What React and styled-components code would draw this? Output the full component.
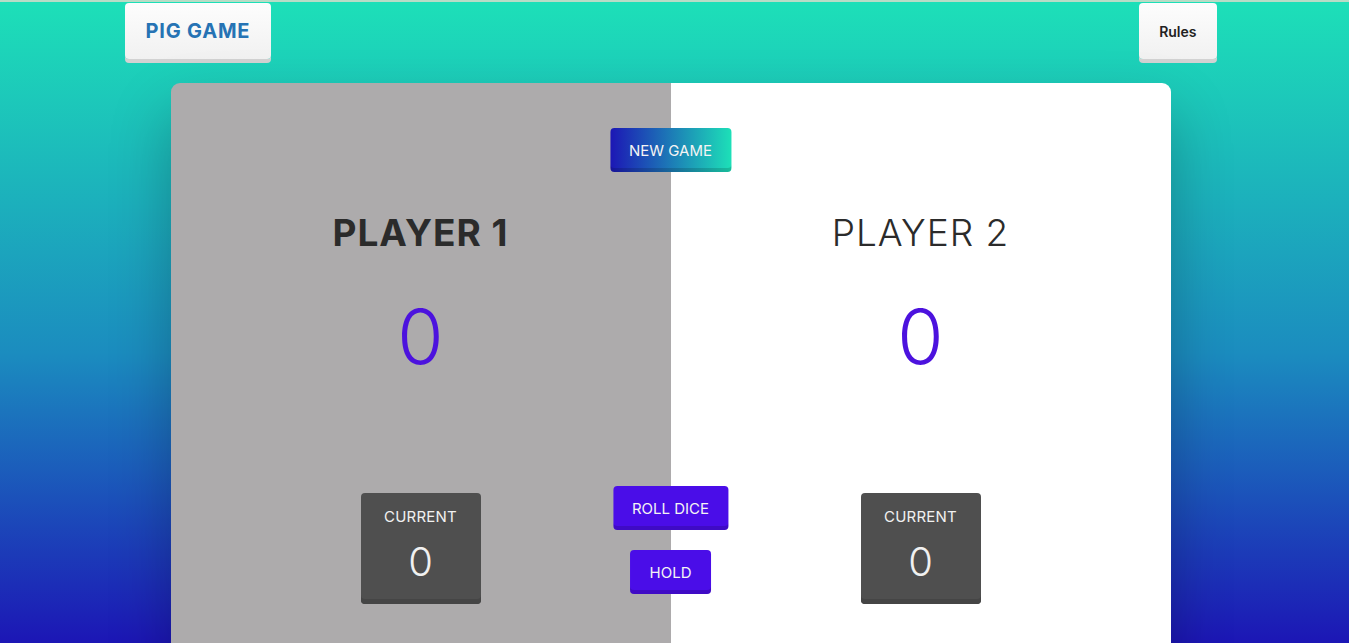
import React from 'react';
import styled, { createGlobalStyle } from 'styled-components';

const GlobalStyle = createGlobalStyle`
  * { box-sizing: border-box; }
  html, body { margin: 0; padding: 0; }
  body {
    font-family: 'Inter', 'Noto Sans', sans-serif;
    background: linear-gradient(to bottom, #1de0b8 0%, #1b8cbf 55%, #1c16b5 100%);
    min-height: 100vh;
    overflow: hidden;
  }
`;

const Page = styled.div`
  height: 643px;
  overflow: hidden;
  border-top: 2px solid #b8dcc6;
  padding-right: 8px;
  display: flex;
  flex-direction: column;
  align-items: center;
`;

const Header = styled.header`
  width: 1092px;
  display: flex;
  justify-content: space-between;
  padding-top: 1px;
`;

const TopButton = styled.button`
  height: 56px;
  padding: 0 ${(p) => p.$pad}px;
  border: none;
  border-radius: 4px;
  background: linear-gradient(to bottom, #fdfdfd, #f1f1f1);
  box-shadow: 0 4px 0 #d2d2d2;
  font-family: inherit;
  font-size: ${(p) => p.$size}px;
  font-weight: ${(p) => p.$weight};
  letter-spacing: ${(p) => p.$spacing || 0}px;
  color: ${(p) => p.$color};
  cursor: pointer;
`;

const Board = styled.main`
  position: relative;
  margin-top: 24px;
  width: 1000px;
  height: 620px;
  flex-shrink: 0;
  border-radius: 9px;
  overflow: hidden;
  display: grid;
  grid-template-columns: 1fr 1fr;
  box-shadow: 0 30px 60px rgba(0, 0, 0, 0.25);
`;

const Player = styled.section`
  background: ${(p) => (p.$active ? '#adabac' : '#ffffff')};
  display: flex;
  flex-direction: column;
  align-items: center;
  padding-top: 122px;
`;

const Name = styled.h2`
  margin: 0;
  font-size: 37px;
  line-height: 56px;
  letter-spacing: 1px;
  font-weight: ${(p) => (p.$active ? 700 : 300)};
  color: #2b2b2b;
`;

const Score = styled.p`
  margin: 26px 0 0;
  font-size: 75px;
  line-height: 100px;
  font-weight: 300;
  color: #4c12de;
`;

const Current = styled.div`
  margin-top: 106px;
  width: 120px;
  height: 111px;
  border-radius: 4px;
  background: #4f4f4f;
  box-shadow: inset 0 -5px 0 #454545;
  display: flex;
  flex-direction: column;
  align-items: center;
  padding-top: 15px;
  color: #f1f1f1;
`;

const CurrentLabel = styled.span`
  font-size: 15px;
  line-height: 18px;
  letter-spacing: 0.2px;
`;

const CurrentScore = styled.span`
  margin-top: 12px;
  font-size: 40px;
  line-height: 48px;
  font-weight: 300;
`;

const Action = styled.button`
  position: absolute;
  left: 50%;
  top: ${(p) => p.$top}px;
  transform: translateX(-50%);
  height: 44px;
  padding: 0 ${(p) => p.$pad}px;
  border: none;
  border-radius: 4px;
  font-family: inherit;
  font-size: 15px;
  font-weight: 400;
  color: #f4f4f4;
  background: ${(p) =>
    p.$gradient ? 'linear-gradient(to right, #1c17b5, #1de0b8)' : '#4a0de8'};
  box-shadow: inset 0 -4px 0 rgba(0, 0, 0, 0.15);
  white-space: nowrap;
  cursor: pointer;
`;

const players = [
  { name: 'PLAYER 1', score: 0, current: 0, active: true },
  { name: 'PLAYER 2', score: 0, current: 0, active: false },
];

const App = () => (
  <>
    <GlobalStyle />
    <Page>
      <Header>
        <TopButton $pad={21} $size={20} $weight={700} $spacing={0.8} $color="#2673b4">PIG GAME</TopButton>
        <TopButton $pad={20} $size={14} $weight={600} $color="#222">Rules</TopButton>
      </Header>
      <Board>
        {players.map((p) => (
          <Player key={p.name} $active={p.active}>
            <Name $active={p.active}>{p.name}</Name>
            <Score>{p.score}</Score>
            <Current>
              <CurrentLabel>CURRENT</CurrentLabel>
              <CurrentScore>{p.current}</CurrentScore>
            </Current>
          </Player>
        ))}
        <Action $top={45} $pad={19} $gradient>NEW GAME</Action>
        <Action $top={403} $pad={19}>ROLL DICE</Action>
        <Action $top={467} $pad={20}>HOLD</Action>
      </Board>
    </Page>
  </>
);

export default App;
